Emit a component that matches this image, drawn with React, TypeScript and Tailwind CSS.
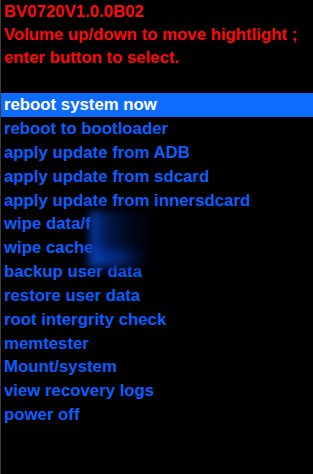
const items = [
  "reboot system now",
  "reboot to bootloader",
  "apply update from ADB",
  "apply update from sdcard",
  "apply update from innersdcard",
  "wipe data/f",
  "wipe cache",
  "backup user data",
  "restore user data",
  "root intergrity check",
  "memtester",
  "Mount/system",
  "view recovery logs",
  "power off",
];

export default function App() {
  const selected = 0;
  return (
    <div className="relative h-[474px] w-[313px] overflow-hidden border-l border-[#3c3c3c] bg-black font-['Liberation_Sans',Arial,sans-serif] text-[16.8px] font-bold">
      <div className="pl-[3px] leading-[23px] text-[#ff0a0a]">
        <div>BV0720V1.0.0B02</div>
        <div>Volume up/down to move hightlight ;</div>
        <div>enter button to select.</div>
      </div>
      <ul className="mt-[24px]">
        {items.map((label, i) => (
          <li
            key={label}
            className={
              i === selected
                ? "h-[24px] bg-[#0d6cff] pl-[3px] leading-[24px] text-white"
                : "h-[23.85px] pl-[3px] leading-[23.85px] text-[#0a5fff]"
            }
          >
            {label}
          </li>
        ))}
      </ul>
      {/* redacted part of the wipe rows */}
      <div className="absolute left-[89px] top-[211px] h-[56px] w-[64px] bg-[linear-gradient(to_right,#0a46c4_0%,#031c5a_20%,#010a22_55%,#000_100%)] blur-[4px]">
        <div className="mt-[40px] h-[14px] w-[54px] bg-[linear-gradient(to_right,#0a4ad0,#0536a0_55%,transparent)] opacity-80 blur-[5px]" />
      </div>
    </div>
  );
}
